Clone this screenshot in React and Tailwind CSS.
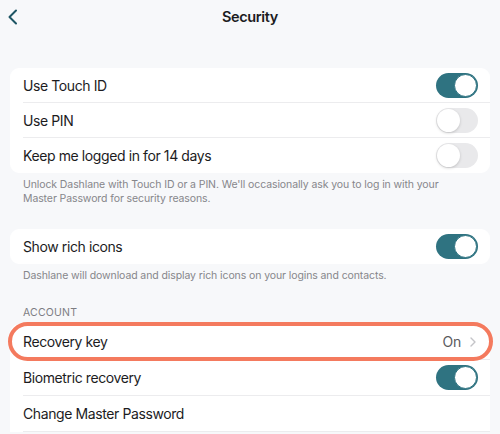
import React from "react";

function Toggle({ on }) {
  if (on) {
    return (
      <div className="w-[42px] h-[25px] rounded-full bg-[#2f7381] relative shrink-0">
        <div className="absolute right-[1px] top-[1px] w-[23px] h-[23px] rounded-full bg-white border border-[#2f7381]" />
      </div>
    );
  }
  return (
    <div className="w-[42px] h-[25px] rounded-full bg-[#e9e9eb] relative shrink-0">
      <div className="absolute left-[1px] top-[1px] w-[23px] h-[23px] rounded-full bg-white shadow-[0_1px_3px_rgba(0,0,0,0.18)]" />
    </div>
  );
}

function Row({ label, children, last, h = "h-[35px]", relative }) {
  return (
    <div className={`${h} pl-[13px] flex ${relative ? "relative" : ""}`}>
      <div className={`flex-1 flex items-center pr-[12px] ${last ? "" : "border-b border-[#ececee]"}`}>
        <span className="flex-1 text-[14px] tracking-[-0.4px] text-[#1c1c1e]">{label}</span>
        {children}
      </div>
    </div>
  );
}

export default function App() {
  return (
    <div
      className="w-[500px] h-[434px] overflow-hidden bg-[#f7f8fa]"
      style={{ fontFamily: "Inter, 'Noto Sans', sans-serif" }}
    >
      <div className="h-[34px] relative flex items-center justify-center">
        <svg
          className="absolute left-[7px] top-[9px]"
          width="12"
          height="16"
          viewBox="0 0 12 16"
          fill="none"
        >
          <path d="M9 1.5 L2.5 8 L9 14.5" stroke="#1e5564" strokeWidth="2" strokeLinecap="round" strokeLinejoin="round" />
        </svg>
        <span className="text-[14.5px] font-semibold tracking-[-0.4px] text-[#1c1c1e]">Security</span>
      </div>

      <div className="mt-[34px] mx-[10px] bg-white rounded-[9px] overflow-hidden">
        <Row label="Use Touch ID"><Toggle on /></Row>
        <Row label="Use PIN"><Toggle /></Row>
        <Row label="Keep me logged in for 14 days" last><Toggle /></Row>
      </div>
      <p className="pl-[23px] pr-[50px] pt-[5px] text-[10.5px] tracking-[-0.1px] leading-[14px] text-[#86868a]">
        Unlock Dashlane with Touch ID or a PIN. We'll occasionally ask you to log in with your Master Password for security reasons.
      </p>

      <div className="mt-[23px] mx-[10px] bg-white rounded-[9px] overflow-hidden">
        <Row label="Show rich icons" last><Toggle on /></Row>
      </div>
      <p className="px-[23px] pt-[5px] text-[10.5px] tracking-[-0.1px] leading-[14px] text-[#86868a]">
        Dashlane will download and display rich icons on your logins and contacts.
      </p>

      <p className="mt-[23px] px-[23px] text-[10.5px] leading-[14px] text-[#7d7d82] tracking-[0.2px]">ACCOUNT</p>

      <div className="mt-[4px] mx-[10px] bg-white rounded-t-[9px] relative">
        <Row label="Recovery key" h="h-[36px]" relative>
          <span className="text-[14px] tracking-[-0.2px] text-[#5a5a5e] mr-[9px]">On</span>
          <svg width="6" height="10" viewBox="0 0 6 10" fill="none" className="mr-[2px]">
            <path d="M1 1 L5 5 L1 9" stroke="#c4c4c8" strokeWidth="1.4" strokeLinecap="round" strokeLinejoin="round" />
          </svg>
          <div className="absolute -left-[2px] -right-[3px] -top-[2px] -bottom-[1px] rounded-full border-[4px] border-[#f47a5e] pointer-events-none" />
        </Row>
        <Row label="Biometric recovery" h="h-[36px]"><Toggle on /></Row>
        <Row label="Change Master Password" h="h-[36px]" />
      </div>
    </div>
  );
}
